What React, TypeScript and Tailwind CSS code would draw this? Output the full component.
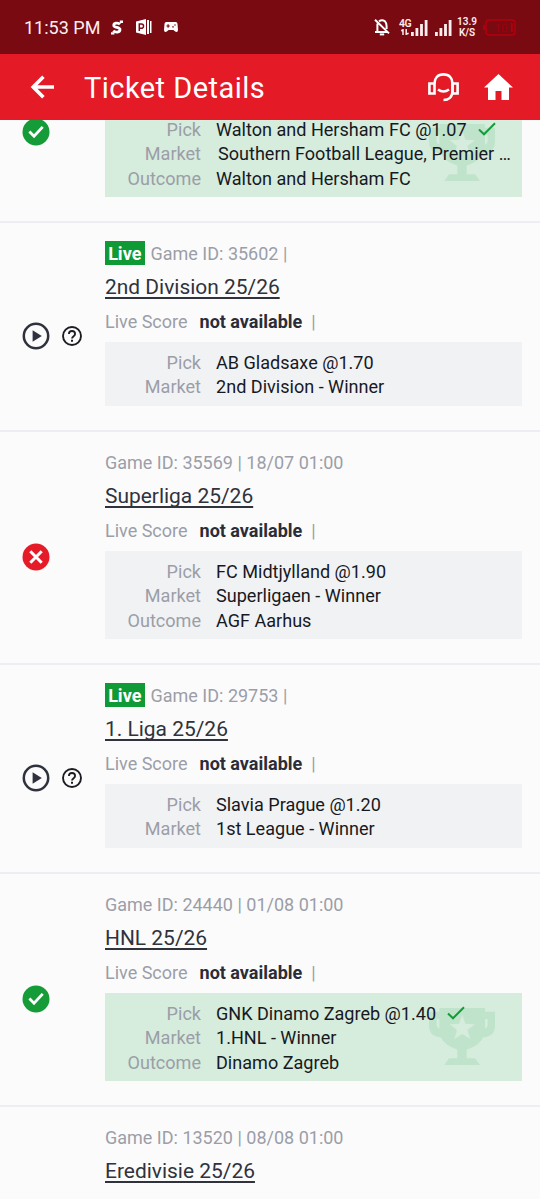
import React from 'react';

type Status = 'won' | 'lost' | 'live';

interface Selection {
    gameId?: string;
    title?: string;
    status?: Status;
    liveScore?: boolean;
    pick?: string;
    market?: string;
    outcome?: string;
    truncated?: boolean;
}

const selections: Selection[] = [
    {
        status: 'won',
        pick: 'Walton and Hersham FC @1.07',
        market: 'Southern Football League, Premier …',
        outcome: 'Walton and Hersham FC',
        truncated: true,
    },
    { gameId: '35602 |', title: '2nd Division 25/26', status: 'live', liveScore: true, pick: 'AB Gladsaxe @1.70', market: '2nd Division - Winner' },
    { gameId: '35569 | 18/07 01:00', title: 'Superliga 25/26', status: 'lost', liveScore: true, pick: 'FC Midtjylland @1.90', market: 'Superligaen - Winner', outcome: 'AGF Aarhus' },
    { gameId: '29753 |', title: '1. Liga 25/26', status: 'live', liveScore: true, pick: 'Slavia Prague @1.20', market: '1st League - Winner' },
    { gameId: '24440 | 01/08 01:00', title: 'HNL 25/26', status: 'won', liveScore: true, pick: 'GNK Dinamo Zagreb @1.40', market: '1.HNL - Winner', outcome: 'Dinamo Zagreb' },
    { gameId: '13520 | 08/08 01:00', title: 'Eredivisie 25/26' },
];

const TrophyIcon = () => (
    <svg viewBox="0 0 198 171" className="absolute right-[27px] top-[15px] h-[57px] w-[66px]" fill="#c0e4cb">
        <path
            fillRule="evenodd"
            d="M31 0H168V11H198V52Q198 86 163 88Q149 114 113 125V151H138L153 171H46L60 151H85V125Q49 114 35 88Q0 86 0 52V11H31ZM31 33H23V52Q23 60 31 62ZM168 33V62Q176 60 176 52V33ZM100 20L90 47L62 49L84 66L76 93L100 78L124 93L115 66L138 49L109 47Z"
        />
    </svg>
);

const StatusIcon: React.FC<{ status: Status }> = ({ status }) => {
    if (status === 'live') {
        return (
            <>
                <svg viewBox="0 0 28 28" className="size-7" fill="none">
                    <circle cx="14" cy="14" r="12.2" stroke="#2f323d" strokeWidth="2.5" />
                    <path d="M10.6 8.2V19.8L19.8 14Z" fill="#2f323d" />
                </svg>
                <svg viewBox="0 0 20 20" className="ml-3 size-5" fill="none" stroke="#1c1d22">
                    <circle cx="10" cy="10" r="9" strokeWidth="1.9" />
                    <path d="M6.9 8.1A3.1 3.1 0 0 1 13.1 8.1C13.1 10.1 10 10.3 10 12.6" strokeWidth="1.8" />
                    <path d="M10 13.8V15.7" strokeWidth="2" />
                </svg>
            </>
        );
    }
    return (
        <svg viewBox="0 0 28 28" className="size-7" fill="none" stroke="#fff">
            <circle cx="14" cy="14" r="13.5" fill={status === 'won' ? '#159b37' : '#e51c28'} stroke="none" />
            {status === 'won' ? (
                <path d="M7.4 13.6L12 18.2L20.7 8.9" strokeWidth="2.8" />
            ) : (
                <path d="M8.3 8.3L19.7 19.7M19.7 8.3L8.3 19.7" strokeWidth="3" />
            )}
        </svg>
    );
};

const DetailRow: React.FC<{ label: string; children: React.ReactNode }> = ({ label, children }) => (
    <div className="flex h-[24.5px] items-center whitespace-nowrap text-[18.07px]">
        <span className="w-24 shrink-0 text-right text-[#9b9ea8]">{label}</span>
        <span className="ml-[15px] flex items-center text-[#17191f]">{children}</span>
    </div>
);

const SelectionItem: React.FC<{ item: Selection }> = ({ item }) => (
    <li className="flex border-b-2 border-[#eceef2]">
        <div className={`flex w-[105px] shrink-0 items-center pl-[22px] ${item.liveScore ? 'pt-5' : 'pt-[18px]'}`}>
            {item.status && <StatusIcon status={item.status} />}
        </div>
        <div className="w-[417px] pt-[18.25px] pb-[24.25px]">
            <div className="flex h-6 items-center text-[#9b9ea8]">
                {item.status === 'live' && (
                    <span className="mr-1.5 flex h-6 w-[39.5px] items-center justify-center bg-[#109a36] font-bold text-white">Live</span>
                )}
                {item.gameId && <span>Game ID: {item.gameId}</span>}
            </div>
            <h2 className="h-[42px] pt-2 text-[20.95px] leading-[28px] text-[#30323c] underline decoration-[1.5px] underline-offset-[3px] [text-decoration-skip-ink:none]">
                {item.title}
            </h2>
            {item.liveScore && (
                <div className="flex h-[34.75px] items-start pt-[2.75px] leading-[24px] text-[#9b9ea8]">
                    <span>Live Score</span>
                    <b className="ml-3 text-[#2a2d38]">not available</b>
                    <span className="ml-[9px]">|</span>
                </div>
            )}
            {item.pick && (
                <div className={`relative pt-2 pb-[6.5px] ${item.status === 'won' ? 'bg-[#d6ecdc]' : 'bg-[#f1f2f4]'}`}>
                    {item.status === 'won' && <TrophyIcon />}
                    <div className="relative">
                        <DetailRow label="Pick">
                            {item.pick}
                            {item.status === 'won' && (
                                <svg viewBox="0 0 18 14" className="ml-[11px] h-3.5 w-[18px]" fill="none" stroke="#159b37" strokeWidth="2">
                                    <path d="M1 7.5L6 12.3L17 1.2" />
                                </svg>
                            )}
                        </DetailRow>
                        <DetailRow label="Market">
                            <span className={item.truncated ? 'ml-[2px]' : ''}>{item.market}</span>
                        </DetailRow>
                        {item.outcome && <DetailRow label="Outcome">{item.outcome}</DetailRow>}
                    </div>
                </div>
            )}
        </div>
    </li>
);

const SignalBars = () => (
    <svg viewBox="0 0 17 17" className="h-[17px] w-[17px]" fill="#fdeef0">
        <path d="M0 13H2.8V17H0ZM4.5 9H7.3V17H4.5ZM9.1 5H11.9V17H9.1ZM13.7 1H16.5V17H13.7Z" />
    </svg>
);

const StatusBar = () => (
    <div className="flex h-[54px] items-center bg-[#790a12] pl-6 text-[#fdeef0]">
        <span className="w-[87px] text-[18px]">11:53 PM</span>
        <svg viewBox="0 0 12 15" className="h-[15px] w-3" fill="none" stroke="#fff">
            <path d="M9 4.2C7 2.2 2.5 3 2.8 5.6C3 8 9 6.8 9 9.6C9 12.6 4.5 13 2.2 10.8" strokeWidth="2.8" />
            <path d="M8.8 1.8H12M0 13.4H3.4" strokeWidth="2.4" />
        </svg>
        <svg viewBox="0 0 16 16" className="ml-[13px] size-4">
            <path d="M0 2.4L10 0V16L0 13.6ZM11 1H13V15H11ZM14 2H15.5V14H14Z" fill="#fff" />
            <path d="M3.3 12V5H5.4A2.1 2.1 0 0 1 5.4 9.3H3.3" fill="none" stroke="#790a12" strokeWidth="1.5" />
        </svg>
        <svg viewBox="0 0 14 10" className="ml-[12px] h-2.5 w-3.5">
            <path d="M2.4 0H11.6Q13.6 0 13.6 3L14 8Q14 10 12.4 10Q11.4 10 9.4 8H4.6Q2.6 10 1.6 10Q0 10 0 8L.4 3Q.4 0 2.4 0Z" fill="#fff" />
            <path d="M2.4 4H5.8M4.1 2.3V5.7M8.2 4.8H9.8M10.2 3H11.8" stroke="#790a12" strokeWidth="1.2" />
        </svg>
        <svg viewBox="0 0 16 18" className="ml-[196px] h-[18px] w-4" fill="none" stroke="#fff" strokeWidth="2">
            <path d="M5 3.4Q8 1.2 11 3.4Q12.6 5 12.6 8V11M3.4 5.4V13.4M1 14H14M1 1.8L15 15.4" />
            <path d="M5.8 16.4H10.2" strokeWidth="2" />
        </svg>
        <div className="ml-[9px] mb-px w-[12px] text-[10.5px] font-semibold leading-[10px] tracking-[-0.4px]">
            <div>4G</div>
            <svg viewBox="0 0 8 6" className="ml-0.5 h-1.5 w-2" fill="none" stroke="#fdeef0" strokeWidth="1.5">
                <path d="M.2 1.8L2 .7V6M5.2 0V5.2L7.6 4.2" />
            </svg>
        </div>
        <SignalBars />
        <div className="ml-[7px] flex">
            <SignalBars />
        </div>
        <div className="ml-[5px] w-[20px] text-center text-[10px] font-semibold leading-[11px]">
            <div>13.9</div>
            <div>K/S</div>
        </div>
        <svg viewBox="0 0 33 17" className="ml-[6px] h-[17px] w-[33px]" fill="none" stroke="#b5000c" strokeWidth="1.4">
            <rect x="3" y="1" width="29" height="15" rx="3" />
            <path d="M1 6V11M28.8 4V13" strokeWidth="1.8" />
            <text x="11.5" y="12.7" fontSize="11.5" fill="#a0000b" stroke="none">10</text>
        </svg>
    </div>
);

const AppBar = () => (
    <div className="flex h-[66px] items-center bg-[#e51a27] pl-[30px] text-white">
        <svg viewBox="0 0 24 24" className="h-6 w-6" fill="none" stroke="#fff" strokeWidth="3.6">
            <path d="M24 12H3.4M13.4 1.8L3.2 12L13.4 22.2" />
        </svg>
        <h1 className="ml-[30px] w-[344px] pt-[3px] text-[29px] tracking-[0.45px]">Ticket Details</h1>
        <svg viewBox="0 0 31 29" className="h-[29px] w-[31px]" fill="none" stroke="#fff" strokeWidth="2.6">
            <path d="M6.5 10.5C6.5 5 10 1.4 15.5 1.4S24.5 5 24.5 10.5V18C24.5 24 20.5 27 15.5 27" />
            <path d="M6.5 10.5H1.4V20.5H6.5ZM24.5 10.5H29.6V20.5H24.5ZM10 16.5Q15.5 20.5 21 16.5" />
        </svg>
        <svg viewBox="0 0 29 26" className="ml-[25px] h-[26px] w-[29px]" fill="#fff">
            <path d="M14.5 0L29 13.6H25V26H17.5V17H11.5V26H4V13.6H0Z" />
        </svg>
    </div>
);

export default function App() {
    return (
        <div className="h-[1199px] w-[540px] overflow-hidden bg-[#fbfbfb] font-['Roboto',sans-serif] text-[18px]">
            <header className="relative z-10">
                <StatusBar />
                <AppBar />
            </header>
            <ul className="-mt-[95.45px]">
                {selections.map((item, index) => (
                    <SelectionItem key={index} item={item} />
                ))}
            </ul>
        </div>
    );
}
